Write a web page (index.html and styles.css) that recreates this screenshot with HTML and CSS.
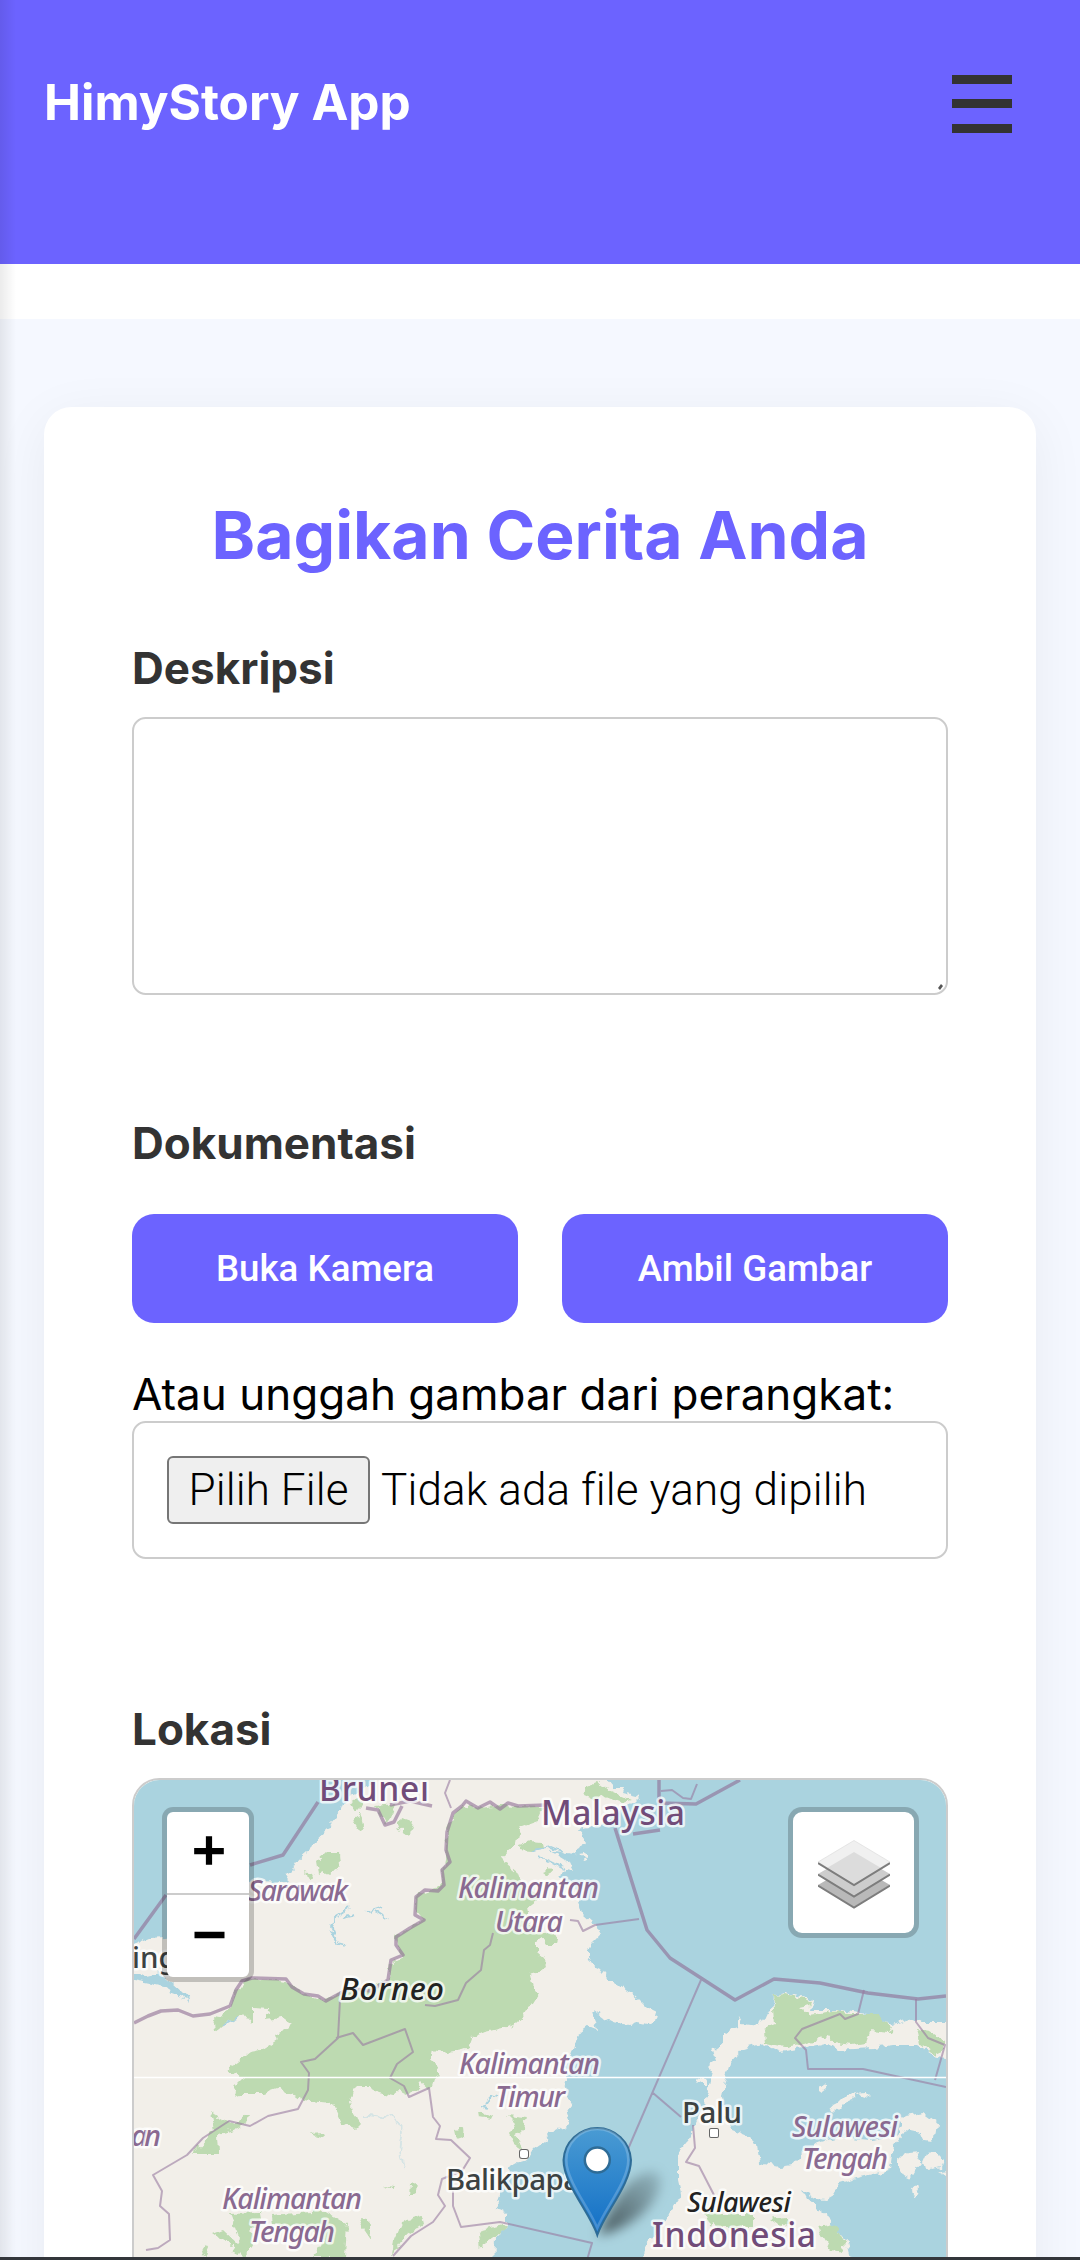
FILE: index.html
```html
<!DOCTYPE html>
<html lang="id">
<head>
<meta charset="utf-8">
<title>HimyStory App</title>
<link rel="stylesheet" href="styles.css">
</head>
<body>
<header class="topbar">
  <h1 class="brand">HimyStory App</h1>
  <button class="menu" aria-label="Menu"><span></span><span></span><span></span></button>
</header>
<main class="main">
  <form class="card">
    <h2 class="title">Bagikan Cerita Anda</h2>
    <label class="label label-desc">Deskripsi</label>
    <div class="textarea">
      <svg class="grip" viewBox="0 0 8 8"><path d="M1 5 4 1 6 3 3 7z"/></svg>
    </div>
    <label class="label label-doc">Dokumentasi</label>
    <div class="actions">
      <button type="button" class="btn">Buka Kamera</button>
      <button type="button" class="btn">Ambil Gambar</button>
    </div>
    <p class="hint">Atau unggah gambar dari perangkat:</p>
    <div class="file"><span class="file-btn">Pilih File</span><span class="file-name">Tidak ada file yang dipilih</span></div>
    <label class="label label-loc">Lokasi</label>
    <div class="map">
      <svg class="tiles" viewBox="134 1780 812 477" preserveAspectRatio="xMinYMin slice">
        <defs>
          <linearGradient id="pin" x1="0" y1="0" x2="0" y2="1"><stop offset="0" stop-color="#4a9bd3"/><stop offset="1" stop-color="#126fc6"/></linearGradient>
          <linearGradient id="shade" x1="0" y1="1" x2="1" y2="0"><stop offset="0" stop-color="#000" stop-opacity=".6"/><stop offset="1" stop-color="#000" stop-opacity=".12"/></linearGradient>
          <filter id="soft" x="-30%" y="-30%" width="160%" height="160%"><feGaussianBlur stdDeviation="6"/></filter>
          <filter id="coast" filterUnits="userSpaceOnUse" x="110" y="1760" width="860" height="520">
            <feTurbulence type="fractalNoise" baseFrequency=".13" numOctaves="2" seed="4" result="n"/>
            <feDisplacementMap in="SourceGraphic" in2="n" scale="9" xChannelSelector="R" yChannelSelector="G"/>
          </filter>
        </defs>
        <rect class="land" x="134" y="1780" width="812" height="480"/>
        <g filter="url(#coast)">
        <g class="water">
          <path d="M120 1766H377V1780L363 1790 352 1795 343 1803 340 1811 330 1823 326 1830 312 1843 308 1852 297 1862 294 1868 287 1875 285 1880 277 1882 253 1880 235 1890 215 1925 180 1935 165 1937 150 1938 134 1945H120z"/>
          <path d="M120 1972H134L146 1976 160 1973 172 1983 182 1992 190 2001 176 1995 164 1987 150 1984 134 1981H120z"/>
          <path d="M607 1766V1780L613 1787 625 1787 623 1793 640 1797 634 1803 625 1807 600 1826 577 1830 585 1842 580 1850 573 1854 547 1850 562 1857 570 1862 575 1872 568 1869 557 1877 575 1886 580 1903 583 1915 600 1930 598 1938 588 1948 588 1958 592 1965 600 1969 610 1982 620 1985 630 1992 638 1999 647 2008 657 2013 655 2021 647 2024 638 2022 630 2025 612 2022 604 2018 593 2010 595 2017 598 2030 588 2026 580 2032 575 2042 572 2053 567 2065 567 2077 563 2090 572 2105 566 2113 570 2125 560 2128 550 2133 543 2143 533 2150 527 2160 517 2163 508 2168 512 2174 500 2185 500 2197 495 2210 507 2213 507 2227 500 2233 495 2237 494 2275H962V1766z"/>
        </g>
        <g class="land">
          <path d="M643 2275 645 2247 657 2233 664 2220 670 2213 673 2203 682 2197 678 2180 678 2160 682 2147 690 2137 695 2124 700 2113 704 2106 708 2093 713 2070 708 2065 716 2060 713 2050 723 2043 723 2032 737 2027 739 2017 743 2025 757 2027 763 2017 772 2012 773 1995 787 1993 813 2000 810 2010 840 2010 873 2015 893 2025 910 2018 923 2022 962 2022V2057H946L933 2055 917 2045 893 2045 873 2048 837 2050 827 2043 807 2047 780 2052 760 2043 743 2048 730 2063 725 2080 722 2097 727 2120 733 2130 748 2136 757 2145 760 2163 780 2167 793 2165 803 2153 817 2143 840 2137 870 2140 893 2137 903 2127 900 2117 923 2113 937 2123 935 2138 931 2143 924 2142 920 2133 905 2130 893 2147 890 2170 860 2177 840 2183 832 2196 825 2200 817 2199 803 2190 807 2198 817 2207 828 2216 833 2227 843 2235 847 2243 855 2275z"/>
          <path d="M696 2077 704 2079 708 2086 703 2086 698 2081zM819 2087l4-2 3 4-4 3-3-2zM828 2109l10-5 8-8 11-3-2 5-9 4-8 8zM857 2093l8-1 6 6-6-2zM898 2159l10-6 12-1-3 8 4 3-7 8-4 7-6-3-6-9zM922 2162l4-9 9-1 8 8-3 8-8 2-6-5zM912 2192l6-7 2 2-5 10zM939 2172l20-2v12zM580 1853l5-1 3 8-4 1z"/>
        </g>
        <g class="wood">
          <path d="M463 1805 480 1808 500 1805 543 1807 537 1822 520 1828 517 1842 503 1855 507 1864 517 1872 520 1880 540 1898 527 1908 530 1925 557 1937 556 1944 547 1944 543 1938 537 1942 537 1952 545 1959 546 1967 537 1973 530 1975 533 1988 537 1994 530 2005 524 2015 515 2023 507 2027 485 2032 473 2037 469 2048 463 2050 448 2053 433 2050 431 2060 441 2075 433 2080 430 2090 421 2082 410 2095 400 2090 393 2096 380 2093 370 2087 355 2087 350 2103 353 2114 360 2124 355 2129 342 2123 335 2108 330 2103 303 2100 297 2096 285 2093 280 2087 263 2093 245 2093 233 2097 235 2085 243 2077 227 2070 238 2062 250 2052 262 2050 277 2040 275 2034 292 2025 282 2018 265 2020 270 2009 253 2008 253 2025 244 2014 226 2022 214 2032 213 2022 232 2007 233 1995 247 1978 287 1982 303 1993 323 2000 340 1992 370 1985 388 1980 390 1963 402 1957 395 1937 423 1920 415 1910 417 1895 440 1887 446 1860 447 1830 453 1817z"/>
          <path d="M375 1806 396 1804 392 1817 386 1825zM350 1802l8-5 4 10-6 6zM353 1823l7-10 4 16-5 3zM396 1821l7-4 11 4-3 13-12-4zM316 1861l10-9h14l1 14-11 8-6-3-6 4-1-8zM306 1871l6 2 3 7-6 2zM192 2154l22-23-4-20 8 6 12 6 9-2 10-9-1 9-11 8-19 5 1 20z"/>
          <path d="M586 1788 598 1783 606 1789 620 1795 632 1800 620 1803 605 1797 594 1800 584 1796zM518 1846l12-4 12 1 1 6-12 2-12-1zM541 1872l9-4 3 3-8 4zM773 1995 787 1994 811 2001 809 2006 800 2008 810 2015 838 2010 850 2014 877 2014 893 2028 890 2033 870 2031 866 2043 853 2045 834 2043 828 2036 802 2044 785 2047 765 2043 764 2029 775 2024zM917 2029 929 2031 944 2040 944 2051 935 2055 920 2044zM705 2214h48v13h-34l-6-4-2 5zM770 2218l16-2 6 4-10 7zM818 2226l16-3 12 20-4 9-13-4-8-14z"/>
          <path d="M507 2116l18 2-2 12-8 6 8 14-9-6-5-10 6-10zM455 2130l10-3 1 9-9 3zM478 2112l15 4-2 4-12-2zM230 2213l30-1 1 10-12 7 5 15-10 13-13-5 9-13zM270 2215l55-4 22 13-2 33h-32l12-16-20-14-34-3zM359 2218l10 1 2 18-6-2zM402 2222l20-6 2 8-18 12-14 20 2-16zM478 2232l24-6 4 3-22 14-4 7-1-9zM213 2234l10-4 15 14-7 2zM202 2250l8-6-3 13-4-3zM311 2134l14-1 1 5zM384 2186l12 1-2 3zM411 2184l6-1-1 10-6 3z"/>
        </g>
        <g class="stream"><path d="M349 1906 337 1914 331 1928 338 1943 346 1945M340 1918 355 1915M368 1911l15-5M374 1911l15 10M531 1851l20-4 23 10M538 1856l26 13M222 2025l16-8M479 2105l9 3M484 2104l7-9 7 2M593 2012l4 8"/><path class="faint" d="M362 2115l20 3 10-4 11 17-3 20 4 18"/></g>
        </g>
        <g class="border-thick">
          <path d="M462 1806 466 1801 478 1808 490 1802 500 1809 508 1803 518 1806 546 1805M462 1806 453 1813 447 1832 446 1850 450 1862 442 1870 444 1885 438 1891 425 1890 416 1897 415 1915 424 1920 410 1928 396 1937 396 1945 403 1955 391 1960 388 1980 370 1991 350 1988 335 1996 326 2001 318 1996 304 1994 292 1987 286 1979 252 1978 242 1981 236 1990 230 2006 210 2014 193 2016 178 2010 161 2011 148 2016 134 2023M366 1808l12 2 7 15 9-3 8-16M390 1805l20-4 22 5"/>
          <path d="M134 1939 166 1895M250 1865 283 1855 318 1802M615 1828 647 1930 670 1958 735 2000 774 1979 820 1983 868 1993 918 1999 946 1996M659 1780v23l37 1 44-24M633 1834l27-4"/>
        </g>
        <g class="border-thin">
          <path d="M450 1780l-5 13 6 15M661 1791l11-1 11 8 8 1 6-15M493 1933 490 1945 484 1950 481 1970 466 1983 458 2000 435 2006 425 2005M570 1920l8 1 5 10 12-6 44-6M701 1980 619 2170M653 2093l28 24M340 2000l-2 38-23 21-14 3 8 11-1 17-10 19-30 7-18 10-21-5-26 17-16 17-34 20 9 16-2 15 9 8 1 26-12 8-12 2M336 2038l17-5 10 12 42-16 8 23-16 12-7 14 14 8 5 11 20-9 4 29 7 9-4 13 15 1 19 18-8 13-20 8-4 16 7 11-12 16-22 14-18 20M453 2191v15l8 21 39-5 92 21-5 17M693 2125l2 23-9 14 13 4 15 29M864 1990l-6 24-13 5-5-5-38 15-7 9 11 12 2 19h55l83 18M916 1999v23l12 16 17 7-10 35"/>
        </g>
        <g class="region">
          <text x="458" y="1898" textLength="141">Kalimantan</text><text x="495" y="1932" textLength="68">Utara</text>
          <text x="459" y="2074" textLength="141">Kalimantan</text><text x="495" y="2107" textLength="70">Timur</text>
          <text x="222" y="2209" textLength="140">Kalimantan</text><text x="249" y="2242" textLength="86">Tengah</text>
          <text x="792" y="2137" textLength="106">Sulawesi</text><text x="802" y="2169" textLength="86">Tengah</text>
          <text x="248" y="1901" textLength="100">Sarawak</text><text x="131" y="2146" textLength="30">an</text>
        </g>
        <g class="country">
          <text x="319" y="1801" textLength="110">Brunei</text><text x="541" y="1825" textLength="144">Malaysia</text><text x="652" y="2247" textLength="164">Indonesia</text>
        </g>
        <g class="island"><text x="340" y="2000" textLength="104">Borneo</text><text x="687" y="2212" class="small" textLength="104">Sulawesi</text></g>
        <g class="city">
          <text x="132" y="1968">ing</text><text x="446" y="2190" textLength="152">Balikpapan</text><text x="682" y="2123" textLength="60">Palu</text>
          <rect x="520" y="2150" width="8" height="8" rx="2"/><rect x="710" y="2129" width="8" height="8" rx="1"/>
        </g>
        <path d="M134 2077.500H946" stroke="#fff" stroke-width="1.300"/>
        <path d="M598 2235C612 2205 625 2178 648 2172 668 2168 663 2195 642 2214 628 2226 612 2233 598 2235z" fill="url(#shade)" filter="url(#soft)"/>
        <path d="M597.300 2235C590 2213 563.500 2184 563.500 2160A33.800 33.800 0 0 1 631 2160C631 2184 604.600 2213 597.300 2235z" fill="url(#pin)" stroke="#2e6c97" stroke-width="2"/>
        <path d="M597.300 2228C590 2209 566.300 2181 566.300 2160A31 31 0 0 1 628.300 2160C628.300 2181 604.600 2209 597.300 2228z" fill="none" stroke="#fff" stroke-opacity=".2" stroke-width="2.500"/>
        <circle cx="597.300" cy="2160" r="12.500" fill="#fff" stroke="#2e6c97" stroke-width="2.500"/>
      </svg>
      <div class="zoom">
        <svg viewBox="0 0 82 82"><path d="M27 39.500h30M42 24.500v29"/></svg>
        <svg viewBox="0 0 82 82"><path d="M27.500 40h30"/></svg>
      </div>
      <div class="layers">
        <svg viewBox="0 0 72 70">
          <path fill="#b9b9b9" d="M0 45 36 24 72 45 36 67z"/><path class="edge" d="M0 45.500 36 67.500 72 45.500"/>
          <path fill="#cdcdcd" d="M0 34 36 13 72 34 36 56z"/><path class="edge" d="M0 34.500 36 56.500 72 34.500"/>
          <path fill="#f0f0f0" stroke="#ddd" stroke-width=".7" d="M0 22 36 .5 72 22 36 44z"/><path fill="#dcdcdc" d="M36 12 63 28 36 44 9 28z"/><path class="edge" d="M0 23 36 45 72 23"/>
        </svg>
      </div>
    </div>
  </form>
</main>
<div class="drawer-shadow"></div>
<div class="bottom-edge"></div>
</body>
</html>
```
FILE: styles.css
```css
* { box-sizing: border-box; }
body {
  margin: 0;
  height: 2260px;
  overflow: hidden;
  position: relative;
  background: #fff;
  font-family: Inter, sans-serif;
  font-size: 44px;
  color: #000;
}
h1, h2, p { margin: 0; }
button { border: 0; padding: 0; }
.topbar {
  height: 264px;
  margin-bottom: 55px;
  padding: 66px 68px 0 44px;
  display: flex;
  justify-content: space-between;
  align-items: flex-start;
  background: #6c63ff;
}
.brand { font-size: 49.500px; font-weight: 700; line-height: 72px; color: #fff; }
.menu {
  width: 60px;
  padding-top: 8.500px;
  display: flex;
  flex-direction: column;
  gap: 15.500px;
  background: none;
}
.menu span { height: 9px; background: #333; }
.main {
  height: 1941px;
  padding: 88px 44px 0;
  background: #f5f8ff;
}
.card {
  height: 1960px;
  padding: 88px 88px 0;
  display: flex;
  flex-direction: column;
  background: #fff;
  border-radius: 27.500px;
  box-shadow: 0 11px 55px rgba(0, 0, 0, .06);
}
.title {
  font-size: 66px;
  line-height: 80px;
  font-weight: 700;
  text-align: center;
  color: #6c63ff;
}
.label {
  height: 54px;
  font-weight: 700;
  line-height: 54px;
  color: #333;
}
.label-desc { margin-top: 66px; }
.textarea {
  height: 278px;
  margin-top: 22px;
  display: flex;
  align-items: flex-end;
  justify-content: flex-end;
  border: 2px solid #ccc;
  border-radius: 13.750px;
}
.grip { width: 8px; height: 8px; margin: 0 1px 2px; fill: #555; }
.label-doc { margin-top: 121px; }
.actions {
  height: 109px;
  margin-top: 44px;
  display: grid;
  grid-template-columns: 1fr 1fr;
  gap: 44px;
}
.btn {
  font: 500 36.670px Roboto, sans-serif;
  color: #fff;
  background: #6c63ff;
  border-radius: 22px;
}
.hint { margin-top: 44px; line-height: 54px; white-space: nowrap; }
.file {
  height: 138px;
  padding: 0 33px;
  display: flex;
  align-items: center;
  gap: 11px;
  border: 2px solid #ccc;
  border-radius: 13.750px;
  font: 300 44px Roboto, sans-serif;
  letter-spacing: .12px;
  white-space: nowrap;
}
.file-btn {
  width: 203px;
  height: 68px;
  line-height: 64px;
  text-align: center;
  background: #efefef;
  border: 2px solid #767676;
  border-radius: 6px;
}
.label-loc { margin-top: 143px; }
.map {
  position: relative;
  height: 520px;
  margin-top: 22px;
  overflow: hidden;
  border: 2px solid #ccc;
  border-radius: 27.500px;
}
.tiles { display: block; width: 812px; height: 477px; }
.land { fill: #f2efe9; }
.water { fill: #aad3df; }
.wood { fill: #bddab1; }
.stream path { fill: none; stroke: #aad3df; stroke-width: 1.800; }
.stream .faint { stroke-opacity: .4; }
.border-thick path { fill: none; stroke: #8d6d94; stroke-opacity: .6; stroke-width: 3.500; stroke-linejoin: round; }
.border-thin path { fill: none; stroke: #987aa0; stroke-opacity: .6; stroke-width: 2; stroke-linejoin: round; }
.region, .country, .island, .city {
  font-family: "Noto Sans", sans-serif;
  font-weight: 500;
  paint-order: stroke;
  stroke: rgba(255, 255, 255, .75);
  stroke-width: 5px;
  stroke-linejoin: round;
}
.region { font-size: 28.500px; font-style: italic; fill: #8a6a91; }
.country { font-size: 33.500px; fill: #714c79; }
.island { font-size: 31px; font-style: italic; fill: #222; }
.island .small { font-size: 27.500px; }
.city { font-size: 29.500px; fill: #3c4242; }
.city rect { fill: #fff; stroke: #666; stroke-width: 2; }
.zoom {
  position: absolute;
  left: 28px;
  top: 27px;
  width: 92px;
  border: 5px solid rgba(0, 0, 0, .2);
  border-radius: 11px;
  background: #fff;
  background-clip: padding-box;
}
.zoom svg { display: block; width: 82px; height: 82px; stroke: #000; stroke-width: 6.300; }
.zoom svg:first-child { height: 83px; border-bottom: 2px solid #ccc; }
.layers {
  position: absolute;
  right: 27px;
  top: 27px;
  width: 131px;
  height: 131px;
  padding-top: 4px;
  display: flex;
  align-items: center;
  justify-content: center;
  border: 5px solid rgba(0, 0, 0, .2);
  border-radius: 14px;
  background: #fff;
  background-clip: padding-box;
}
.layers svg { width: 72px; height: 70px; }
.edge { fill: none; stroke: #7d7d7d; stroke-width: 2; }
.drawer-shadow {
  position: absolute;
  left: 0;
  top: 0;
  width: 16px;
  height: 100%;
  background: linear-gradient(to right, rgba(0, 0, 0, .08), rgba(0, 0, 0, .04) 50%, transparent);
}
.bottom-edge {
  position: absolute;
  left: 0;
  bottom: 0;
  width: 100%;
  height: 3px;
  background: #33363b;
}
```
